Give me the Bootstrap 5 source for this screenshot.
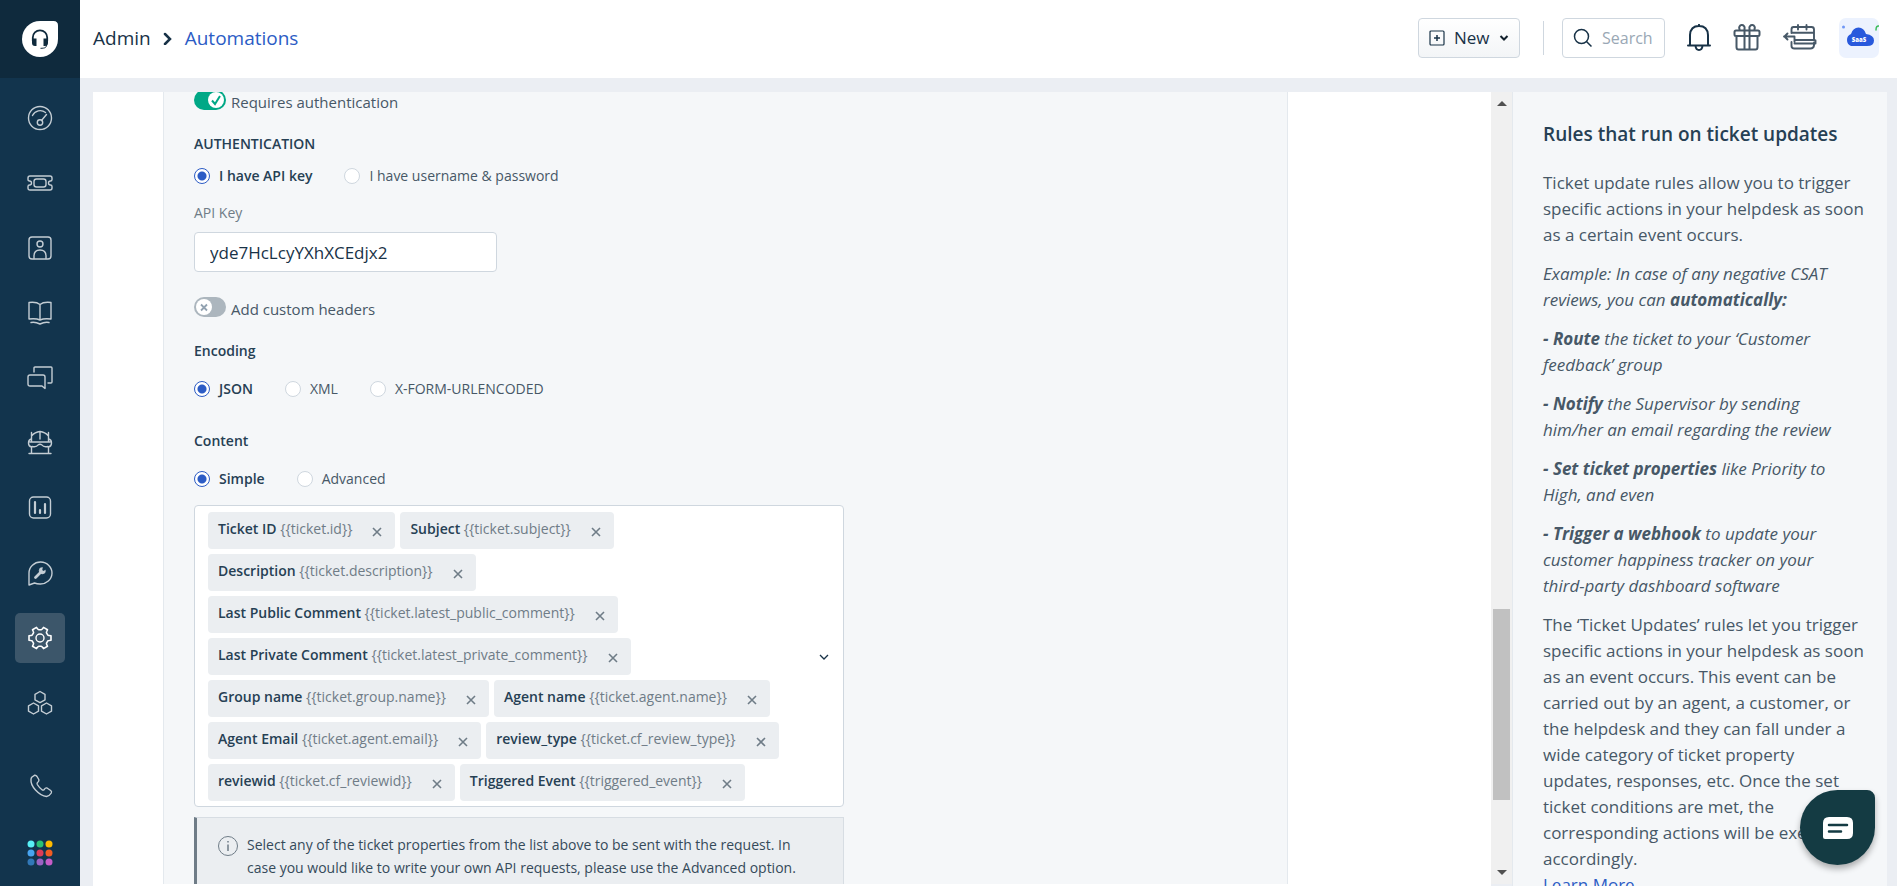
<!DOCTYPE html>
<html lang="en">
<head>
<meta charset="utf-8">
<meta name="viewport" content="width=device-width, initial-scale=1">
<title>Admin - Automations</title>
<link href="https://cdn.jsdelivr.net/npm/bootstrap@5.3.0/dist/css/bootstrap.min.css" rel="stylesheet">
<style>
  :root { --navy: #12344d; --ink: #183247; --slate: #475867; --line: #cfd7df; --blue: #2c5cc5; --panel: #f5f7f9; }
  body { font-family: "Open Sans", "Noto Sans", sans-serif; font-size: 15px; line-height: 20px; color: var(--slate); background: #ebeef3; }
  svg { display: block; flex: none; }
  /* sidebar */
  .side-rail { width: 80px; background: var(--navy); }
  .brand-box { height: 78px; background: #0f2a3d; }
  .rail-list { gap: 15px; padding-top: 15px; }
  .rail-foot { gap: 17px; padding-bottom: 8px; }
  .rail-btn { width: 50px; height: 50px; border-radius: 5px; color: #c4cdd4; }
  .rail-btn.is-active { background: #3c566a; color: #fff; }
  .rail-btn svg, .top-icon svg { fill: none; stroke: currentColor; stroke-width: 1.4; stroke-linecap: round; stroke-linejoin: round; }
  /* header */
  .top-bar { height: 78px; padding: 0 18px 2px 13px; }
  .crumb { font-size: 19px; line-height: 26px; gap: 12px; color: var(--ink); }
  .crumb a { color: var(--blue); }
  .new-btn { width: 102px; height: 40px; border: 1px solid var(--line); border-radius: 4px; background: linear-gradient(#fff, #f3f5f7); color: var(--ink); font-size: 17px; font-weight: 500; gap: 9px; padding: 0 14px 0 10px; }
  .v-rule { width: 1px; height: 34px; background: var(--line); margin: 0 18px 0 23px; }
  .search-box { width: 103px; height: 40px; border: 1px solid var(--line); border-radius: 4px; padding-left: 10px; gap: 9px; color: var(--ink); }
  .search-box input { width: 58px; border: 0; outline: 0; padding: 0; font-size: 16px; background: none; }
  .search-box input::placeholder { color: #9aa8b5; opacity: 1; }
  .top-tools { gap: 22px; }
  .top-icon { color: var(--slate); background: none; border: 0; padding: 0; }
  .top-icon.is-dark { color: var(--ink); }
  .top-icon svg { stroke-width: 2; }
  /* main */
  .work-area { padding: 14px 10px 0 13px; }
  .editor { padding: 0 203px 2px 70px; }
  .rule-form { background: var(--panel); border: 1px solid #e4e9ee; border-width: 0 1px; padding: 0 30px; }
  .form-scroll { margin-top: -2px; }
  .sub-head { color: #264054; font-size: 14px; line-height: 20px; font-weight: 600; margin: 0; }
  .switch { appearance: none; width: 32px; height: 20px; margin: 0; border-radius: 10px; background: #acb6be url("data:image/svg+xml,%3Csvg xmlns='http://www.w3.org/2000/svg' width='16' height='16'%3E%3Ccircle cx='8' cy='8' r='8' fill='%23fff'/%3E%3Cpath d='M5 5.500l6 6M11 5.500l-6 6' stroke='%2392a2b1' stroke-width='1.800'/%3E%3C/svg%3E") 2px 2px no-repeat; }
  .switch:checked { background: #00a886 url("data:image/svg+xml,%3Csvg xmlns='http://www.w3.org/2000/svg' width='16' height='16'%3E%3Ccircle cx='8' cy='8' r='8' fill='%23fff'/%3E%3Cpath d='M4 8.500l3 3.500L12 4' fill='none' stroke='%2300a886' stroke-width='2'/%3E%3C/svg%3E") 14px 2px no-repeat; }
  .switch-row { gap: 5px; line-height: 24px; }
  .pick { appearance: none; width: 16px; height: 16px; margin: 0 9px 0 0; border: 1px solid var(--line); border-radius: 50%; background: #fff; }
  .pick:checked { border-color: var(--blue); background: radial-gradient(circle, var(--blue) 4px, #fff 5px); }
  .pick-row { gap: 32px; font-size: 14px; }
  .pick:checked + span { color: #264054; font-weight: 600; }
  .key-label { font-size: 14px; color: #6f7c87; }
  .key-input { width: 303px; height: 40px; border: 1px solid var(--line); border-radius: 4px; padding: 0 15px; font-size: 17px; color: var(--ink); }
  .tag-box { max-width: 650px; border: 1px solid var(--line); border-radius: 4px; background: #fff; padding: 6px 13px 5px; }
  .tag { height: 37px; background: #ebeef1; border-radius: 4px; padding: 0 12px 0 10px; gap: 19px; font-size: 14px; color: #6f7c87; white-space: pre; }
  .tag-text { padding-bottom: 3px; font-weight: 500; }
  .tag b { font-weight: 600; color: #264054; }
  .tag button { width: 12px; height: 12px; border: 0; padding: 0; background: none; color: #6f7c87; }
  .tips { max-width: 650px; border: 1px solid #d7dde3; border-left: 3px solid #6f7c87; background: #ebeef1; padding: 15px 30px 20px 21px; gap: 9px; font-size: 14px; line-height: 23px; color: #354a5a; }
  .scroll-track { width: 21px; background: #f0f0f0; margin-bottom: 2px; padding: 0 2px; }
  .scroll-track i { background: #c1c1c1; }
  .help-pane { width: 375px; background: var(--panel); border-left: 1px solid #e4e9ee; padding: 29px 22px 0 30px; font-size: 17px; line-height: 26px; color: var(--slate); }
  .help-pane h2 { font-size: 19px; line-height: 26px; font-weight: 600; color: #264054; margin: 0 0 23px; }
  .help-pane p { margin: 0 0 13px; }
  .help-pane a { color: var(--blue); }
  .chat-btn { width: 75px; height: 75px; right: 22px; bottom: 21px; border: 0; border-radius: 38px 8px 38px 38px; background: #143b43; box-shadow: 0 4px 6px rgba(0,0,0,.3); }
</style>
</head>
<body>
<div class="d-flex vh-100 overflow-hidden">
  <nav class="side-rail d-flex flex-column flex-shrink-0" aria-label="Main">
    <a href="#" class="brand-box d-flex align-items-center justify-content-center" aria-label="Home">
      <svg width="36" height="36" viewBox="0 0 36 36"><path d="M18 0H31.500Q36 0 36 4.500V18A18 18 0 1 1 18 0Z" fill="#fff"/><path d="M10.800 20v-3.500a7.200 7.200 0 0 1 14.400 0V20" fill="none" stroke="#0f2a3d" stroke-width="1.800"/><path d="M10 17.500h4.500V25H13a3 3 0 0 1-3-3zM21.500 17.500H26V22a3 3 0 0 1-3 3h-1.500z" fill="#0f2a3d"/><path d="M24.500 24c0 2.500-1.500 3.300-6 3.300" fill="none" stroke="#0f2a3d"/></svg>
    </a>
    <div class="rail-list d-flex flex-column align-items-center">
      <a href="#" class="rail-btn d-flex align-items-center justify-content-center" aria-label="Dashboard"><svg width="26" height="26"><circle cx="13" cy="13" r="11.500"/><path d="M5.500 10.500a8.500 8.500 0 0 1 13-3M14.500 15.500l5-6"/><circle cx="13" cy="17.500" r="2.700"/></svg></a>
      <a href="#" class="rail-btn d-flex align-items-center justify-content-center" aria-label="Tickets"><svg width="26" height="26"><path d="M3 6h20q2 0 2 2v1.500q0 1.500-1.500 1.500a2 2 0 0 0 0 4q1.500 0 1.500 1.500V18q0 2-2 2H3q-2 0-2-2v-1.500Q1 15 2.500 15a2 2 0 0 0 0-4Q1 11 1 9.500V8q0-2 2-2z"/><rect x="7" y="9" width="12" height="8" rx="2.500"/></svg></a>
      <a href="#" class="rail-btn d-flex align-items-center justify-content-center" aria-label="Contacts"><svg width="26" height="26"><rect x="2" y="2" width="22" height="22" rx="3"/><circle cx="13" cy="9" r="3"/><path d="M7 23.500V21q0-6 6-6t6 6v2.500"/></svg></a>
      <a href="#" class="rail-btn d-flex align-items-center justify-content-center" aria-label="Solutions"><svg width="26" height="26"><path d="M13 4.500C10 2 6 2 2 2.500V19c4-.5 8-.5 11 1 3-1.500 7-1.500 11-1V2.500C20 2 16 2 13 4.500zV20M4 22.500c4-.8 6 0 9 1.500 3-1.500 5-2.300 9-1.500"/></svg></a>
      <a href="#" class="rail-btn d-flex align-items-center justify-content-center" aria-label="Forums"><svg width="26" height="26"><path d="M7 7V3q0-1 1-1h16q1 0 1 1v14q0 1-1 1h-3M3 10h13q2 0 2 2v11.500L15 21H3q-2 0-2-2v-7q0-2 2-2z"/></svg></a>
      <a href="#" class="rail-btn d-flex align-items-center justify-content-center" aria-label="Bots"><svg width="26" height="26"><path d="M4.500 12V2.500M21.500 12V2.500M4.500 6Q8 2 13 1.500 18 2 21.500 6M13 1.500V9M2 23.500h22M4.500 17v6.500M21.500 17v6.500M4.500 9Q1.500 9.500 1.500 13t3 4M21.500 9q3 .5 3 4t-3 4M3 12h20M5 16.500q4.500 1 6-1.500 2-1.500 4 0 1.500 2.500 6 1.500"/></svg></a>
      <a href="#" class="rail-btn d-flex align-items-center justify-content-center" aria-label="Analytics"><svg width="26" height="26"><rect x="2.500" y="2" width="21" height="21" rx="4"/><path d="M8 7v11M13 15v3M18 9v9" stroke-width="2.200"/></svg></a>
      <a href="#" class="rail-btn d-flex align-items-center justify-content-center" aria-label="Service"><svg width="26" height="26"><path d="M2 25V13A11.500 11 0 1 1 13 24Q10 24 7.500 23z"/><path d="M8.500 17.500L14 12" stroke-width="2.800"/><path d="M18.500 10.500A3.200 3.200 0 1 1 15.500 7.500L15 10l1 1z" fill="currentColor" stroke-width=".5"/></svg></a>
      <a href="#" class="rail-btn is-active d-flex align-items-center justify-content-center" aria-label="Admin"><svg width="26" height="26" viewBox="-13 -13 26 26"><circle r="4"/><path d="M7.700-3.100Q8-2.600 9-2.500L11-2.200V2.200L9 2.500Q8 2.600 7.700 3.100L6.500 5.100Q6.300 5.700 6.700 6.500L7.500 8.300 3.500 10.600 2.300 9.100Q1.800 8.300 1.200 8.200H-1.200Q-1.800 8.300-2.300 9.100L-3.500 10.600-7.500 8.300-6.700 6.500Q-6.300 5.700-6.500 5.100L-7.700 3.100Q-8 2.600-9 2.500L-11 2.200V-2.200L-9-2.500Q-8-2.600-7.700-3.100L-6.500-5.100Q-6.300-5.700-6.700-6.500L-7.500-8.300-3.500-10.600-2.300-9.100Q-1.800-8.300-1.200-8.200H1.200Q1.800-8.300 2.300-9.100L3.500-10.600 7.500-8.300 6.700-6.500Q6.300-5.700 6.500-5.100z" stroke-width="1.600"/></svg></a>
      <a href="#" class="rail-btn d-flex align-items-center justify-content-center" aria-label="Marketplace"><svg width="26" height="26"><path d="M13 1.500l5 2.800v5.600l-5 2.800-5-2.800V4.300zM6.500 13l5 2.800v5.400l-5 2.800-5-2.800v-5.400zM19.500 13l5 2.800v5.400l-5 2.800-5-2.800v-5.400z"/></svg></a>
    </div>
    <div class="rail-foot d-flex flex-column align-items-center mt-auto">
      <a href="#" class="rail-btn d-flex align-items-center justify-content-center" aria-label="Phone"><svg width="26" height="26"><path d="M5 4L7.500 2.300Q9 2 10 3.500L11.800 6.500Q12.300 8 11 9 9.500 10 10.300 11.500 12.500 15 15.300 17 16.500 17.500 17.300 16.300 18.500 14.500 20 15L23.700 17.500Q25 18.500 24.300 20 22.500 23 19.500 23.500 14 23 8.500 17 3.500 11.500 4 6.500 4 5 5 4z"/></svg></a>
      <a href="#" class="rail-btn d-flex align-items-center justify-content-center" aria-label="Apps"><svg width="26" height="26" style="stroke:none"><circle cx="4" cy="4" r="3.500" fill="#58f0f5"/><circle cx="13" cy="4" r="3.500" fill="#2bc275"/><circle cx="22" cy="4" r="3.500" fill="#ffba00"/><circle cx="4" cy="13" r="3.500" fill="#48a4f0"/><circle cx="13" cy="13" r="3.500" fill="#dc3c58"/><circle cx="22" cy="13" r="3.500" fill="#f25c22"/><circle cx="4" cy="22" r="3.500" fill="#3178b8"/><circle cx="13" cy="22" r="3.500" fill="#9a62c4"/><circle cx="22" cy="22" r="3.500" fill="#c65cc8"/></svg></a>
    </div>
  </nav>

  <div class="d-flex flex-column flex-grow-1 overflow-hidden">
    <header class="top-bar d-flex align-items-center bg-white flex-shrink-0">
      <div class="crumb d-flex align-items-center me-auto">
        <span>Admin</span>
        <svg width="10" height="14" fill="none" stroke="#183247" stroke-width="2.500" stroke-linecap="round"><path d="M2 3l5 5-5 5"/></svg>
        <a href="#" class="text-decoration-none">Automations</a>
      </div>
      <button type="button" class="new-btn d-flex align-items-center">
        <svg width="16" height="16" fill="none" stroke="#183247" stroke-width="1.200"><rect x="1" y="1" width="14" height="14" rx="1"/><path d="M8 5v6M5 8h6" stroke-width="1.500"/></svg>
        <span>New</span>
        <svg width="10" height="8" fill="none" stroke="#12202c" stroke-width="2"><path d="M1.500 2L5 5.500 8.500 2"/></svg>
      </button>
      <span class="v-rule"></span>
      <div class="top-tools d-flex align-items-center">
        <label class="search-box d-flex align-items-center">
          <svg width="20" height="20" fill="none" stroke="#183247" stroke-width="1.500"><circle cx="8.500" cy="8.500" r="7"/><path d="M13.500 13.500l5 5"/></svg>
          <input type="text" placeholder="Search" aria-label="Search">
        </label>
        <button type="button" class="top-icon is-dark" aria-label="Notifications"><svg width="24" height="28"><path d="M3 21.500V11Q3.500 2 12 2t9 9v10.500M1 21.500h22M12 2V.800M8.500 22q.5 4 3.500 4t3.500-4"/></svg></button>
        <button type="button" class="top-icon" aria-label="What's new"><svg width="28" height="28"><path d="M3 6.500h22q1.500 0 1.500 1.500v2.500q0 1.500-1.500 1.500H3q-1.500 0-1.500-1.500V8Q1.500 6.500 3 6.500zM3.500 12v11q0 2.500 2 2.500h17q2 0 2-2.500V12M11.500 7v18M16.500 7v18M11.500 6.500V4.500A2.700 2.700 0 1 0 6.500 5M16.500 6.500V4.500A2.700 2.700 0 1 1 21.500 5"/></svg></button>
        <button type="button" class="top-icon" aria-label="Switch"><svg width="34" height="28"><path d="M8.500 9V5.500q0-2.500 2-2.500h18q2.500 0 2.500 2.500V16M8.500 8.800H31M15 1v4.500M23.500 1v4.500M1 12.500h10.500M4.500 9.500l-3 3 3 3M8.500 18v4q0 2.500 3 2.500h16q3 0 3.500-3v-3M11.500 12.500V18M11.500 16H31l1.500.5v3H11.500" stroke-width="1.900"/></svg></button>
        <button type="button" class="top-icon" aria-label="Profile">
          <svg width="40" height="40" style="stroke:none"><rect width="40" height="40" rx="7" fill="#ecf2fe"/><path d="M12 28a6.500 6.500 0 0 1 0-12q2-6.500 7.500-6.500T27 16q8 1 8 6.500T28 28z" fill="#2859dc"/><circle cx="4.500" cy="9" r="1.500" fill="#6f97f5"/><path d="M40 8q-3-.5-3 4" fill="none" stroke="#3dbd5c" stroke-width="1.500"/><text x="20" y="24" text-anchor="middle" font-size="6" font-weight="800" fill="#fff">SaaS</text></svg>
        </button>
      </div>
    </header>

    <main class="work-area d-flex flex-grow-1 overflow-hidden">
      <section class="editor bg-white flex-grow-1 d-flex overflow-hidden">
        <form class="rule-form flex-grow-1 overflow-hidden">
          <div class="form-scroll">
            <label class="switch-row d-flex"><input class="switch" type="checkbox" role="switch" checked><span>Requires authentication</span></label>
            <h3 class="sub-head" style="margin-top:20px">AUTHENTICATION</h3>
            <div class="pick-row d-flex" style="margin-top:12px">
              <label class="d-flex align-items-center"><input class="pick" type="radio" name="auth" checked><span>I have API key</span></label>
              <label class="d-flex align-items-center"><input class="pick" type="radio" name="auth"><span>I have username &amp; password</span></label>
            </div>
            <label for="apikey" class="key-label d-block" style="margin-top:17px">API Key</label>
            <input id="apikey" class="key-input d-block" style="margin-top:9px" type="text" value="yde7HcLcyYXhXCEdjx2">
            <label class="switch-row d-flex" style="margin-top:25px"><input class="switch" type="checkbox" role="switch"><span>Add custom headers</span></label>
            <h3 class="sub-head" style="margin-top:20px">Encoding</h3>
            <div class="pick-row d-flex" style="margin-top:18px">
              <label class="d-flex align-items-center"><input class="pick" type="radio" name="enc" checked><span>JSON</span></label>
              <label class="d-flex align-items-center"><input class="pick" type="radio" name="enc"><span>XML</span></label>
              <label class="d-flex align-items-center"><input class="pick" type="radio" name="enc"><span>X-FORM-URLENCODED</span></label>
            </div>
            <h3 class="sub-head" style="margin-top:32px">Content</h3>
            <div class="pick-row d-flex" style="margin-top:18px">
              <label class="d-flex align-items-center"><input class="pick" type="radio" name="content" checked><span>Simple</span></label>
              <label class="d-flex align-items-center"><input class="pick" type="radio" name="content"><span>Advanced</span></label>
            </div>
            <div class="tag-box d-flex align-items-center" style="margin-top:16px">
              <div class="d-flex flex-wrap flex-grow-1" style="gap:5px" id="tags"></div>
              <svg width="12" height="10" fill="none" stroke="#183247" stroke-width="1.300"><path d="M2 3l4 4 4-4"/></svg>
            </div>
            <div class="tips d-flex" style="margin-top:10px">
              <svg width="20" height="23" fill="none" stroke="#6f7c87"><circle cx="10" cy="13" r="9.500"/><path d="M10 11.500V18M10 8v1.500" stroke-width="1.500"/></svg>
              <div>Select any of the ticket properties from the list above to be sent with the request. In case you would like to write your own API requests, please use the Advanced option.</div>
            </div>
          </div>
        </form>
      </section>
      <div class="scroll-track d-flex flex-column flex-shrink-0 align-items-stretch" aria-hidden="true">
        <svg class="align-self-center" width="10" height="15"><path d="M0 14l5-5 5 5z" fill="#505050"/></svg>
        <span style="flex:502 0 0"></span><i style="flex:191 0 0"></i><span style="flex:69 0 0"></span>
        <svg class="align-self-center" width="10" height="15"><path d="M0 1l5 5 5-5z" fill="#505050"/></svg>
      </div>
      <aside class="help-pane flex-shrink-0 overflow-hidden">
        <h2>Rules that run on ticket updates</h2>
        <p>Ticket update rules allow you to trigger specific actions in your helpdesk as soon as a certain event occurs.</p>
        <p><em>Example: In case of any negative CSAT reviews, you can <strong>automatically:</strong></em></p>
        <p><em><strong>- Route</strong> the ticket to your ‘Customer feedback’ group</em></p>
        <p><em><strong>- Notify</strong> the Supervisor by sending<br>him/her an email regarding the review</em></p>
        <p><em><strong>- Set ticket properties</strong> like Priority to High, and even</em></p>
        <p><em><strong>- Trigger a webhook</strong> to update your customer happiness tracker on your<br>third-party dashboard software</em></p>
        <p>The ‘Ticket Updates’ rules let you trigger specific actions in your helpdesk as soon as an event occurs. This event can be carried out by an agent, a customer, or the helpdesk and they can fall under a wide category of ticket property updates, responses, etc. Once the set ticket conditions are met, the corresponding actions will be executed accordingly.<br><a href="#" class="text-decoration-none">Learn More</a></p>
      </aside>
    </main>
  </div>
</div>
<button type="button" class="chat-btn position-fixed d-flex align-items-center justify-content-center" aria-label="Chat">
  <svg width="30" height="22"><path d="M6 0H24Q30 0 30 6V16Q30 22 24 22H2Q0 22 0 20V6Q0 0 6 0z" fill="#fff"/><path d="M6 8h18M6 14.500h12" stroke="#143b43" stroke-width="2.500" stroke-linecap="round"/></svg>
</button>
<script src="https://cdn.jsdelivr.net/npm/bootstrap@5.3.0/dist/js/bootstrap.bundle.min.js"></script>
<script>
  const tags = [
    ['Ticket ID', 'ticket.id'], ['Subject', 'ticket.subject'], ['Description', 'ticket.description'],
    ['Last Public Comment', 'ticket.latest_public_comment'], ['Last Private Comment', 'ticket.latest_private_comment'],
    ['Group name', 'ticket.group.name'], ['Agent name', 'ticket.agent.name'], ['Agent Email', 'ticket.agent.email'],
    ['review_type', 'ticket.cf_review_type'], ['reviewid', 'ticket.cf_reviewid'], ['Triggered Event', 'triggered_event']
  ];
  document.getElementById('tags').innerHTML = tags.map(([name, key]) =>
    `<span class="tag d-flex align-items-center"><span class="tag-text"><b>${name}</b> {{${key}}}</span><button type="button" aria-label="Remove ${name}"><svg width="12" height="12" stroke="currentColor" stroke-width="1.600"><path d="M2 3l8 8M10 3l-8 8"/></svg></button></span>`).join('');
</script>
</body>
</html>
